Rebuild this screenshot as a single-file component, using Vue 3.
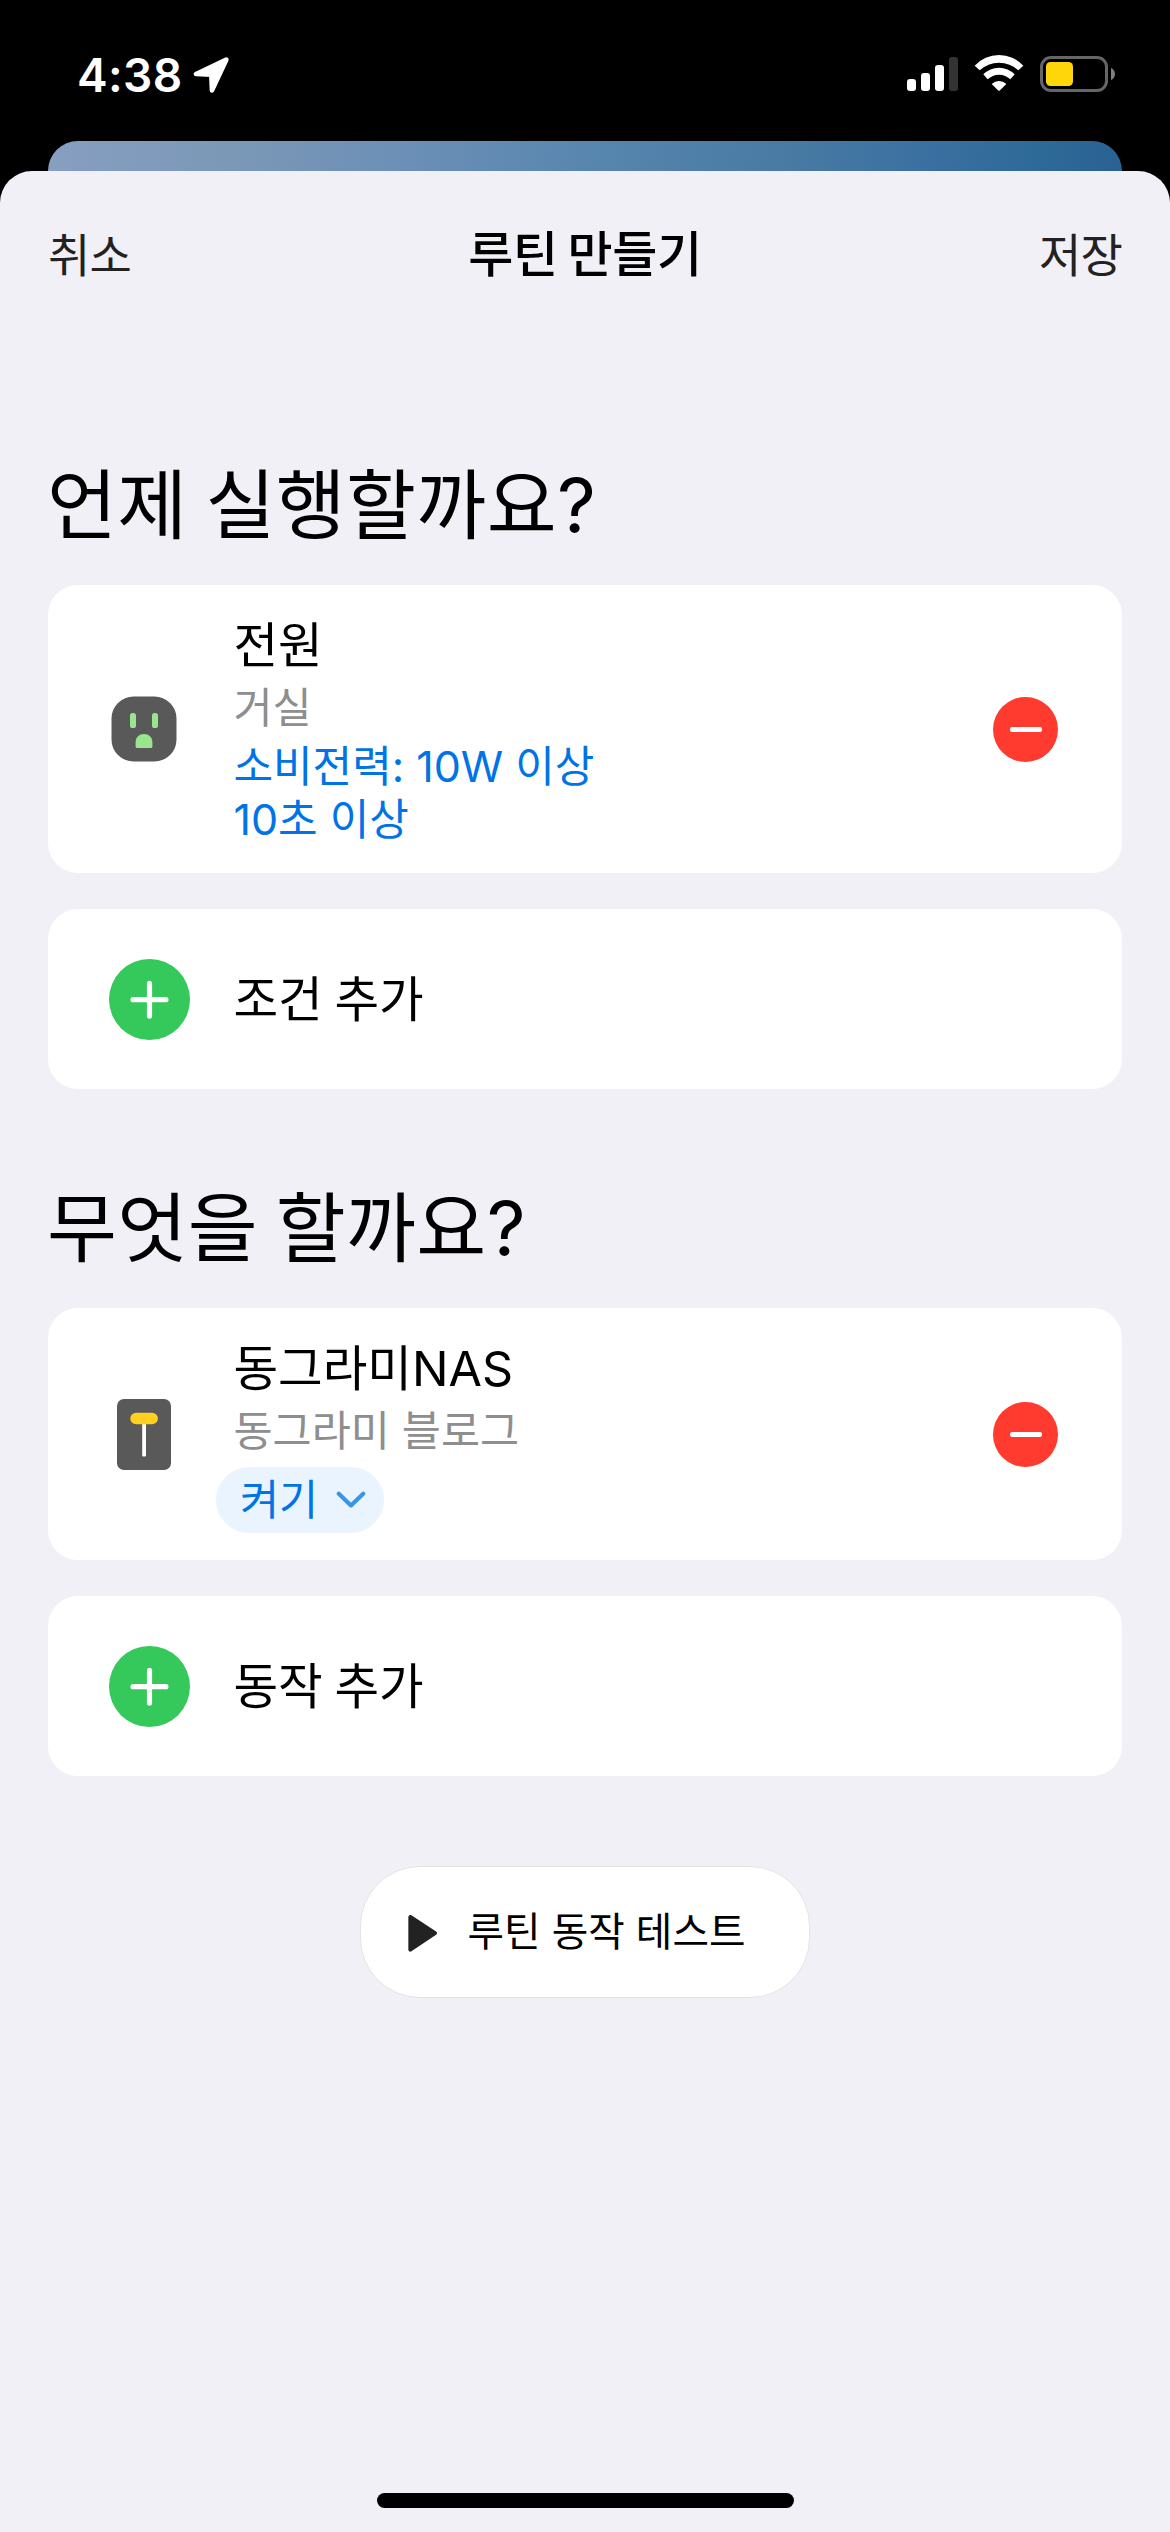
<script setup>
const sections = [
  {
    title: '언제 실행할까요?',
    item: {
      icon: 'outlet',
      name: '전원',
      place: '거실',
      conditions: ['소비전력: 10W 이상', '10초 이상'],
    },
    addLabel: '조건 추가',
  },
  {
    title: '무엇을 할까요?',
    item: {
      icon: 'switch',
      name: '동그라미NAS',
      place: '동그라미 블로그',
      action: '켜기',
    },
    addLabel: '동작 추가',
  },
]
</script>

<template>
  <div class="screen">
    <div class="status">
      <div class="clock">
        <span class="time">4:38</span>
        <svg class="location" viewBox="576 168 114 114">
          <path d="M679 179 588 222 634 224 636 271Z" fill="#fff" stroke="#fff" stroke-width="14" stroke-linejoin="round" />
        </svg>
      </div>
      <div class="indicators">
        <div class="signal">
          <i class="bar b1"></i><i class="bar b2"></i><i class="bar b3"></i><i class="bar b4"></i>
        </div>
        <svg class="wifi" viewBox="612 162 150 114" fill="#fff">
          <path d="M614 197A99 99 0 0 1 760 197L745 211A85 85 0 0 0 629 211Z" />
          <path d="M640 223A65 65 0 0 1 734 223L721 238A48 48 0 0 0 653 238Z" />
          <path d="M665 252A31 31 0 0 1 709 252L690 271Q687 274 684 271Z" />
        </svg>
        <div class="battery"><div class="level"></div></div>
        <svg class="nub" viewBox="0 0 4 12"><path d="M0 0C5.3 2 5.3 10 0 12Z" fill="#808080" /></svg>
      </div>
    </div>

    <div class="behind"></div>

    <main class="sheet">
      <header class="nav">
        <button class="nav-btn">취소</button>
        <h1 class="nav-title">루틴 만들기</h1>
        <button class="nav-btn">저장</button>
      </header>

      <section v-for="s in sections" :key="s.title" class="section">
        <h2 class="heading">{{ s.title }}</h2>

        <div class="card item">
          <div class="lead">
            <svg v-if="s.item.icon === 'outlet'" class="outlet" viewBox="0 0 66 66">
              <rect x="0.5" y="0.5" width="65" height="65" rx="22" fill="#595959" />
              <rect x="19" y="17" width="6" height="15" rx="2.6" fill="#98e68e" />
              <rect x="41" y="17" width="6" height="15" rx="2.6" fill="#98e68e" />
              <path d="M24.6 46.5C24.6 41 28.3 38 33 38S41.4 41 41.4 46.5V50.5Q41.4 52 39.9 52H26.1Q24.6 52 24.6 50.5Z" fill="#98e68e" />
            </svg>
            <svg v-else class="switch" viewBox="0 0 54 71">
              <rect width="54" height="71" rx="7" fill="#595959" />
              <rect x="25.2" y="20" width="3.8" height="37.5" rx="1" fill="#fff" />
              <rect x="13.3" y="13.7" width="27.6" height="11.6" rx="5.8" fill="#ffd01f" />
            </svg>
          </div>
          <div class="body">
            <div class="name">{{ s.item.name }}</div>
            <div class="place">{{ s.item.place }}</div>
            <div v-for="c in s.item.conditions" :key="c" class="condition">{{ c }}</div>
            <button v-if="s.item.action" class="action">
              <span>{{ s.item.action }}</span>
              <svg class="chevron" viewBox="0 0 30 18">
                <path d="M2.8 2.8 15 14.4 27.2 2.8" fill="none" stroke="#3896e2" stroke-width="4.2" stroke-linecap="round" stroke-linejoin="round" />
              </svg>
            </button>
          </div>
          <button class="remove"><i></i></button>
        </div>

        <div class="card add">
          <svg class="plus" viewBox="0 0 81 81">
            <circle cx="40.5" cy="40.5" r="40.5" fill="#35c85a" />
            <path d="M40.5 24.3V57.1M24.1 40.7H56.9" stroke="#fff" stroke-width="5.2" stroke-linecap="round" />
          </svg>
          <span class="add-label">{{ s.addLabel }}</span>
        </div>
      </section>

      <button class="test">
        <svg class="play" viewBox="204 222 90 115">
          <path d="M211 231 285 279.500 211 329Z" fill="#222" stroke="#222" stroke-width="12" stroke-linejoin="round" />
        </svg>
        <span>루틴 동작 테스트</span>
      </button>

      <div class="home"></div>
    </main>
  </div>
</template>

<style>
body {
  margin: 0;
  background: #000;
}
</style>

<style scoped>
.screen {
  display: flex;
  flex-direction: column;
  width: 1170px;
  height: 2532px;
  overflow: hidden;
  background: #000;
  color: #000;
  font-family: Inter, "Noto Sans CJK KR", sans-serif;
}

button {
  padding: 0;
  border: 0;
  background: none;
  color: inherit;
  font: inherit;
}

.status {
  display: flex;
  justify-content: space-between;
  align-items: flex-start;
  box-sizing: border-box;
  height: 141px;
  padding: 54px 55px 0 77px;
}

.clock {
  display: flex;
  align-items: flex-start;
  color: #fff;
}

.time {
  width: 115px;
  font-size: 46px;
  font-weight: 560;
  line-height: 42px;
  letter-spacing: 0.4px;
}

.location {
  width: 38px;
  height: 38px;
  margin-top: 2px;
}

.indicators {
  display: flex;
  align-items: flex-start;
}

.signal {
  display: flex;
  align-items: flex-end;
  gap: 5px;
  height: 37px;
  margin-right: 16px;
}

.bar {
  width: 9px;
  border-radius: 3px;
  background: #fff;
}

.b1 { height: 12px; }
.b2 { height: 18px; }
.b3 { height: 26px; }
.b4 { height: 34px; background: #333; }

.wifi {
  width: 50px;
  height: 38px;
}

.battery {
  box-sizing: border-box;
  width: 68px;
  height: 36px;
  margin: 2px 0 0 16px;
  padding: 3px;
  border: 3px solid #666;
  border-radius: 11px;
}

.level {
  width: 27px;
  height: 24px;
  border-radius: 4.5px;
  background: #ffd60a;
}

.nub {
  width: 4px;
  height: 12px;
  margin: 14px 0 0 3px;
}

.behind {
  height: 30px;
  margin: 0 48px;
  border-radius: 30px 30px 0 0;
  background: linear-gradient(97deg, #879fc1 0%, #7b98b7 17%, #6b8fb6 34%, #5685ae 52%, #487aa3 69%, #3a70a1 82%, #2e6a98 92%, #296193 100%);
}

.sheet {
  display: flex;
  flex: 1;
  flex-direction: column;
  padding: 0 48px;
  border-radius: 32px 32px 0 0;
  background: #f1f0f6;
}

.nav {
  display: flex;
  justify-content: space-between;
  align-items: center;
  height: 168px;
  margin-bottom: 27px;
}

.nav-btn {
  color: #222;
  font-size: 46px;
  line-height: 60px;
  letter-spacing: -0.8px;
}

.nav-title {
  margin: 0;
  font-size: 49px;
  font-weight: 500;
  line-height: 60px;
  letter-spacing: -0.4px;
  word-spacing: -2.8px;
}

.heading {
  margin: 94px 0 35px -1px;
  font-size: 76px;
  font-weight: 400;
  line-height: 90px;
  letter-spacing: 0.4px;
  word-spacing: -4px;
}

.card {
  display: flex;
  align-items: center;
  border-radius: 30px;
  background: #fff;
}

.item {
  padding-right: 64px;
}

.lead {
  display: flex;
  justify-content: center;
  width: 104px;
  margin: 0 38px 0 43.500px;
}

.outlet {
  width: 66px;
  height: 66px;
}

.switch {
  width: 54px;
  height: 71px;
}

.body {
  display: flex;
  flex: 1;
  flex-direction: column;
  align-items: flex-start;
  padding: 32px 0 27px;
}

.name,
.add-label {
  font-size: 48.5px;
  line-height: 58px;
}

.add-label {
  margin-top: 2px;
  word-spacing: -2px;
}

.place {
  color: #8e8e8e;
  font-size: 42.5px;
  line-height: 65px;
}

.condition {
  color: #0073e6;
  font-size: 43px;
  line-height: 53px;
}

.action {
  display: flex;
  justify-content: space-between;
  align-items: center;
  box-sizing: border-box;
  width: 168px;
  height: 66px;
  margin: 4px 0 0 -17.500px;
  padding: 0 18px 0 24px;
  border-radius: 33px;
  background: #e9f4ff;
  color: #0073e6;
  font-size: 42.5px;
  line-height: 66px;
}

.chevron {
  width: 30px;
  height: 18px;
}

.remove {
  display: flex;
  justify-content: center;
  align-items: center;
  width: 65px;
  height: 65px;
  border-radius: 50%;
  background: #ff3b30;
}

.remove i {
  width: 32px;
  height: 5px;
  border-radius: 2px;
  background: #fff;
}

.add {
  height: 180px;
  margin-top: 36px;
}

.plus {
  width: 81px;
  height: 81px;
  margin: 1px 43.5px 0 61px;
}

.test {
  display: flex;
  align-items: center;
  align-self: center;
  box-sizing: border-box;
  width: 450px;
  height: 132px;
  margin-top: 90px;
  padding-left: 47px;
  border: 1px solid #e4e4e6;
  border-radius: 60px;
  background: #fff;
  font-size: 39.7px;
  line-height: 60px;
}

.play {
  width: 30px;
  height: 38.3px;
  margin: 2px 29.500px 0 0;
}

.home {
  align-self: center;
  width: 417px;
  height: 15px;
  margin: auto 0 24px;
  border-radius: 8px;
  background: #000;
}
</style>
